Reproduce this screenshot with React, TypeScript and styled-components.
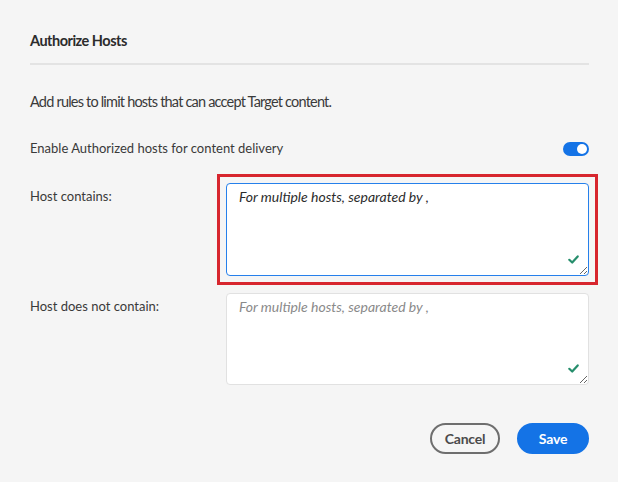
import React from "react";
import styled, { createGlobalStyle } from "styled-components";

const GlobalStyle = createGlobalStyle`
  html, body {
    margin: 0;
    padding: 0;
    background: #f5f5f5;
  }
  body {
    font-family: Lato, "Open Sans", sans-serif;
    color: #2c2c2c;
  }
`;

const Dialog = styled.div`
  width: 618px;
  height: 482px;
  box-sizing: border-box;
  padding: 30px 29px 0 30px;
  background: #f5f5f5;
`;

const Title = styled.h2`
  margin: 0;
  font-size: 14.5px;
  letter-spacing: -0.5px;
  font-weight: 700;
  line-height: 22px;
  color: #2c2c2c;
  padding-bottom: 11px;
  border-bottom: 2px solid #e3e3e3;
`;

const Intro = styled.p`
  margin: 27px 0 0;
  font-size: 14.5px;
  letter-spacing: -0.8px;
  line-height: 20px;
  color: #3a3a3a;
`;

const SwitchRow = styled.div`
  display: flex;
  align-items: center;
  justify-content: space-between;
  margin-top: 26px;
  height: 20px;
`;

const Label = styled.span`
  font-size: 13px;
  line-height: 20px;
  color: #3a3a3a;
`;

const Switch = styled.span`
  position: relative;
  display: inline-block;
  width: 26px;
  height: 14px;
  margin-top: 2px;
  border-radius: 7px;
  background: #1473e6;

  &::after {
    content: "";
    position: absolute;
    right: 2px;
    top: 2px;
    width: 10px;
    height: 10px;
    border-radius: 50%;
    background: #fff;
  }
`;

const Rows = styled.div`
  display: grid;
  grid-template-columns: 196px 1fr;
  row-gap: 17px;
  margin-top: 25px;
`;

const RowLabel = styled(Label)`
  padding-top: 3px;
`;

const FieldWrap = styled.div<{ $highlight?: boolean }>`
  position: relative;
  height: ${(p) => (p.$highlight ? 93 : 92)}px;
  outline: ${(p) => (p.$highlight ? "3px solid #d7262e" : "none")};
  outline-offset: 6px;
`;

const Area = styled.textarea<{ $focused?: boolean }>`
  display: block;
  box-sizing: border-box;
  width: 100%;
  height: 100%;
  margin: 0;
  padding: 4px 12px;
  border: 1px solid ${(p) => (p.$focused ? "#2680eb" : "#e1e1e1")};
  border-radius: 4px;
  background: #fff;
  font-family: Lato, "Open Sans", sans-serif;
  font-style: italic;
  font-size: 14px;
  line-height: 18px;
  resize: both;
  outline: none;

  &::placeholder {
    color: ${(p) => (p.$focused ? "#2c2c2c" : "#8a8a8a")};
    opacity: 1;
  }
`;

const Check = styled.svg`
  position: absolute;
  right: 10px;
  bottom: 12px;
  width: 11px;
  height: 9px;
`;

const Actions = styled.div`
  display: flex;
  justify-content: flex-end;
  gap: 17px;
  margin-top: 38px;
`;

const Button = styled.button<{ $primary?: boolean }>`
  box-sizing: border-box;
  height: 31px;
  width: ${(p) => (p.$primary ? 72 : 70)}px;
  padding: 0;
  border-radius: 16px;
  border: 2px solid ${(p) => (p.$primary ? "#1473e6" : "#6e6e6e")};
  background: ${(p) => (p.$primary ? "#1473e6" : "transparent")};
  color: ${(p) => (p.$primary ? "#fff" : "#4b4b4b")};
  font-family: Lato, "Open Sans", sans-serif;
  font-size: 14px;
  font-weight: 700;
  letter-spacing: -0.2px;
  cursor: pointer;
`;

const CheckMark = () => (
  <Check viewBox="0 0 11 9">
    <path
      d="M1.3 4.8 L4.2 7.5 L9.7 1.4"
      fill="none"
      stroke="#268e6c"
      strokeWidth="2.2"
      strokeLinecap="round"
      strokeLinejoin="round"
    />
  </Check>
);

export default function App() {
  return (
    <>
      <GlobalStyle />
      <Dialog>
        <Title>Authorize Hosts</Title>
        <Intro>Add rules to limit hosts that can accept Target content.</Intro>
        <SwitchRow>
          <Label>Enable Authorized hosts for content delivery</Label>
          <Switch />
        </SwitchRow>
        <Rows>
          <RowLabel>Host contains:</RowLabel>
          <FieldWrap $highlight>
            <Area $focused placeholder="For multiple hosts, separated by ," />
            <CheckMark />
          </FieldWrap>
          <RowLabel>Host does not contain:</RowLabel>
          <FieldWrap>
            <Area placeholder="For multiple hosts, separated by ," />
            <CheckMark />
          </FieldWrap>
        </Rows>
        <Actions>
          <Button>Cancel</Button>
          <Button $primary>Save</Button>
        </Actions>
      </Dialog>
    </>
  );
}
